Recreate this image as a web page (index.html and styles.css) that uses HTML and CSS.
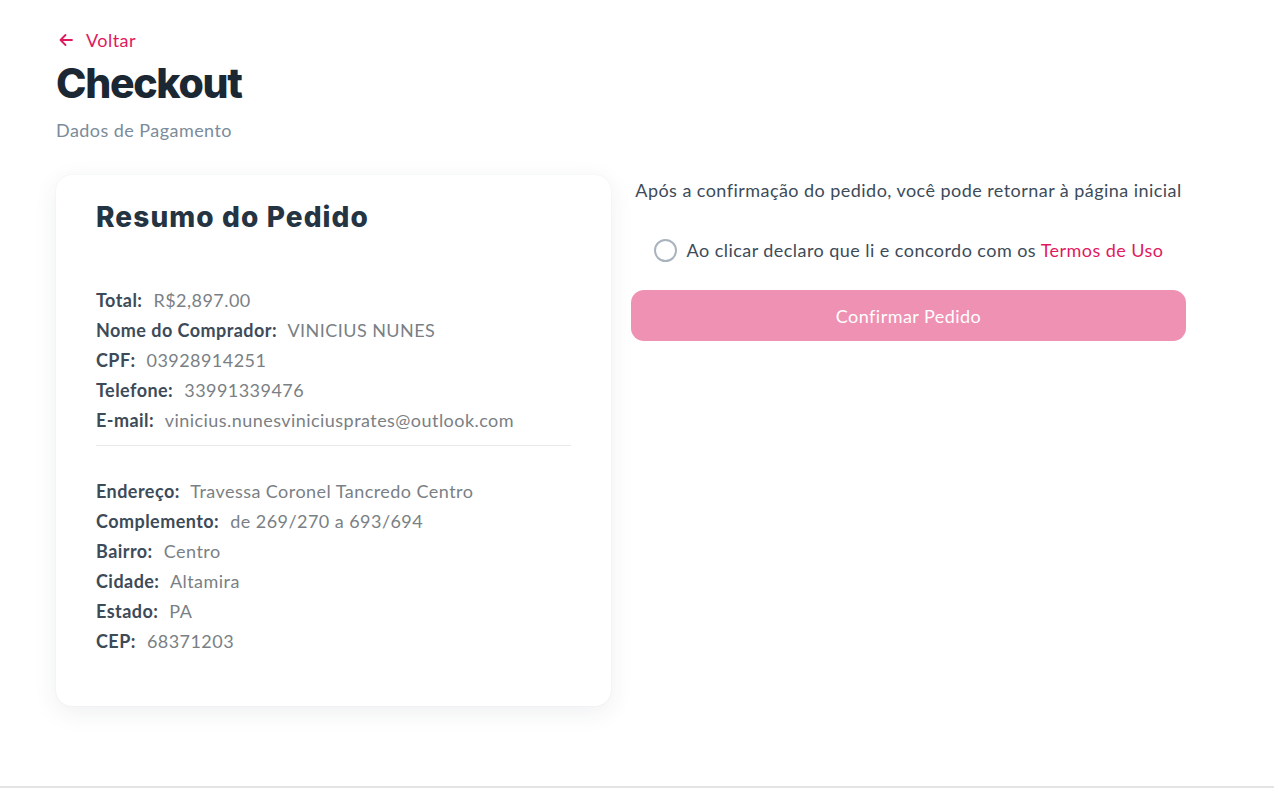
FILE: index.html
```html
<!DOCTYPE html>
<html lang="pt-BR">
<head>
<meta charset="utf-8">
<title>Checkout</title>
<link rel="stylesheet" href="styles.css">
</head>
<body>
<div class="page">
  <header class="head">
    <a class="back" href="#">
      <svg width="16" height="16" viewBox="0 0 16 16" fill="none" stroke="currentColor" stroke-width="1.8" stroke-linecap="round" stroke-linejoin="round"><path d="M14 8H2.5M7.5 3L2.5 8l5 5"/></svg>
      <span>Voltar</span>
    </a>
    <h1 class="title">Checkout</h1>
    <p class="subtitle">Dados de Pagamento</p>
  </header>
  <main class="grid">
    <section class="card">
      <h2 class="card-title">Resumo do Pedido</h2>
      <div class="group">
        <p class="row"><b>Total:</b> R$2,897.00</p>
        <p class="row"><b>Nome do Comprador:</b> VINICIUS NUNES</p>
        <p class="row"><b>CPF:</b> 03928914251</p>
        <p class="row"><b>Telefone:</b> 33991339476</p>
        <p class="row"><b>E-mail:</b> vinicius.nunesviniciusprates@outlook.com</p>
      </div>
      <hr class="sep">
      <div class="group">
        <p class="row"><b>Endereço:</b> Travessa Coronel Tancredo Centro</p>
        <p class="row"><b>Complemento:</b> de 269/270 a 693/694</p>
        <p class="row"><b>Bairro:</b> Centro</p>
        <p class="row"><b>Cidade:</b> Altamira</p>
        <p class="row"><b>Estado:</b> PA</p>
        <p class="row"><b>CEP:</b> 68371203</p>
      </div>
    </section>
    <section class="side">
      <p class="note">Após a confirmação do pedido, você pode retornar à página inicial</p>
      <label class="check">
        <span class="radio"></span>
        <span>Ao clicar declaro que li e concordo com os <a href="#" class="terms">Termos de Uso</a></span>
      </label>
      <button class="confirm" type="button">Confirmar Pedido</button>
    </section>
  </main>
</div>
<footer class="foot"></footer>
</body>
</html>
```
FILE: styles.css
```css
* { box-sizing: border-box; }
html, body { margin: 0; padding: 0; background: #fff; }
body {
  font-family: "Source Sans Pro", Lato, "Noto Sans", sans-serif;
  color: #3d4b59;
  letter-spacing: 0.45px;
}
.page {
  height: 786px;
  padding: 28px 0 0 56px;
}
.head { display: flex; flex-direction: column; align-items: flex-start; }
.back {
  display: flex;
  align-items: center;
  gap: 12px;
  color: #e0195f;
  text-decoration: none;
  font-size: 18px;
  line-height: 24px;
  padding-left: 2px;
}
.title {
  margin: 5px 0 0;
  font-family: Inter, "Noto Sans", sans-serif;
  font-weight: 800;
  font-size: 41px;
  line-height: 52px;
  color: #1b2733;
  letter-spacing: -1.3px;
}
.subtitle {
  margin: 9px 0 0;
  font-size: 18px;
  line-height: 24px;
  color: #7b8b9a;
}
.grid {
  display: grid;
  grid-template-columns: 555px 555px;
  column-gap: 20px;
  margin-top: 33px;
  align-items: start;
}
.card {
  background: #fff;
  border-radius: 16px;
  box-shadow: 0 6px 24px rgba(40, 50, 60, 0.08), 0 0 2px rgba(40, 50, 60, 0.06);
  padding: 24px 40px 40px;
  height: 531px;
}
.card-title {
  margin: 0;
  font-family: Inter, "Noto Sans", sans-serif;
  font-weight: 800;
  font-size: 28px;
  line-height: 36px;
  color: #253442;
  letter-spacing: 1.1px;
}
.group { display: flex; flex-direction: column; }
.card-title + .group { margin-top: 50px; }
.row {
  margin: 0;
  font-size: 18px;
  line-height: 30px;
  color: #7a7f85;
  white-space: nowrap;
}
.row b { color: #3d4b59; font-weight: 700; margin-right: 6px; }
.sep {
  border: 0;
  border-top: 1px solid #e8eaec;
  margin: 10px 0 30px;
}
.side {
  display: flex;
  flex-direction: column;
  align-items: center;
  padding-top: 2px;
}
.note {
  margin: 0;
  font-size: 18px;
  line-height: 26px;
  color: #3d4b59;
  white-space: nowrap;
}
.check {
  display: flex;
  align-items: center;
  gap: 10px;
  margin-top: 34px;
  font-size: 18px;
  line-height: 26px;
  color: #3d4b59;
  white-space: nowrap;
}
.radio {
  width: 23px;
  height: 23px;
  border: 2px solid #a8b3bd;
  border-radius: 50%;
  flex: none;
}
.terms { color: #e0195f; text-decoration: none; }
.confirm {
  margin-top: 27px;
  width: 100%;
  height: 51px;
  border: 0;
  border-radius: 13px;
  background: #ef91b3;
  color: #fff;
  font-family: inherit;
  font-size: 18px;
  letter-spacing: 0.45px;
}
.foot { border-top: 2px solid #e4e4e4; }
```
